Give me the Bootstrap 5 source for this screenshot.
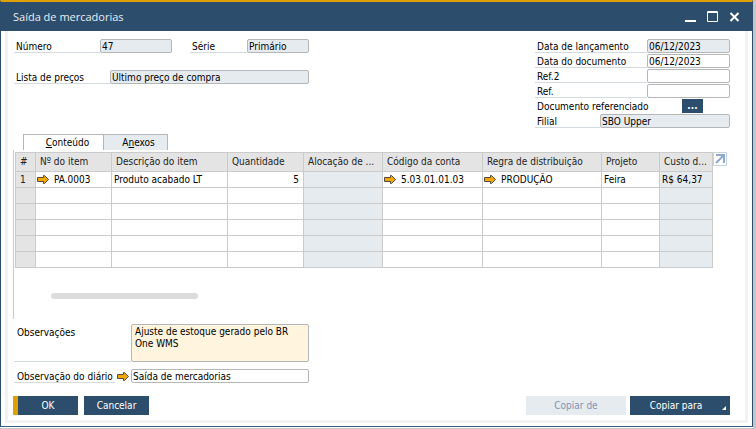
<!DOCTYPE html>
<html lang="pt-BR">
<head>
<meta charset="utf-8">
<meta name="viewport" content="width=device-width, initial-scale=1">
<title>Saída de mercadorias</title>
<link rel="stylesheet" href="https://cdn.jsdelivr.net/npm/bootstrap@5.3.0/dist/css/bootstrap.min.css">
<style>
:root { --navy: #2c4e6c; --gold: #e0a000; --mist: #e6ebf0; --rule: #cbcbcb; }
body { font: 10px/13px "DejaVu Sans Condensed", "DejaVu Sans", sans-serif; color: #000; background: #fff; }
.app-window { min-height: 100vh; border-right: 3px solid #c4c6c9; border-bottom: 1px solid #c4c6c9; }
.window-frame { border: 1px solid var(--navy); border-top: 2px solid var(--gold); border-bottom-color: #3c5f80; }
.title-bar { background: var(--navy); color: #e8edf2; height: 29px; padding: 0 11px 0 12px; }
.title-bar h1 { font: 400 11px/29px "Open Sans", sans-serif; }
.window-buttons { gap: 10px; }
.plain { border: 0; background: none; padding: 0; display: block; }
.window-buttons .plain { color: #fff; }
svg { display: block; flex: none; }
.work-area { margin: 0 4px 3px; border: 3px solid #f2f2f2; border-top: 0; padding: 8px 0 5px 5px; }
.line { display: flex; height: 14px; }
.line label, .line .caption { border-bottom: 1px solid #d5dae0; padding: 1px 0 0 2px; line-height: 14px; white-space: nowrap; }
.line .caption { border-bottom-color: transparent; }
.field { border: 1px solid #b4b6b8; border-radius: 2px; background: #fff; color: #000; padding: 1px 1px 0; min-width: 0; line-height: 12px; display: block; }
.field[readonly] { background: var(--mist); }
.left-form, .notes-form { width: 296px; padding-left: 1px; }
.left-form { gap: 17px; }
.right-form { width: 195px; margin-right: 15px; gap: 1px; }
.w-label { width: 86px; } .w-price { width: 96px; } .w-serie { width: 57px; }
.w-number { width: 72px; } .w-series { width: 62px; } .w-date { width: 83px; } .w-branch { width: 65px; } .w-diary { width: 178px; }
.dots { width: 21px; height: 14px; margin-right: 27px; background: var(--navy); color: #fff; border: 0; padding: 0; line-height: 12px; font-weight: 700; }
.tabs { padding-left: 10px; height: 16px; margin-top: 6px; }
.tabs button { border: 1px solid #b4b6b8; border-bottom: 0; border-radius: 0; background: var(--mist); color: #000; padding: 0; line-height: 15px; width: 65px; }
.tabs button + button { padding-left: 6px; }
.tabs button.active { width: 80px; background: #fff; border-right: 0; padding-left: 8px; }
.grid-panel { border-left: 1px solid var(--rule); padding: 2px 18px 0 1px; height: 169px; }
.items { table-layout: fixed; width: 100%; border-collapse: collapse; }
.items th, .items td { border: 1px solid var(--rule); padding: 0 2px; height: 16px; line-height: 15px; white-space: nowrap; overflow: hidden; }
.items th { background: #e4e4e4; font-weight: 400; color: #222; padding: 0 4px; }
.items thead th { height: 19px; line-height: 18px; }
.items thead th.tight { padding: 0 0 0 4px; }
.items .dim { background: var(--mist); }
.c-num { width: 20px; } .c-item { width: 76px; } .c-desc { width: 116px; } .c-alloc { width: 79px; }
.c-account { width: 100px; } .c-rule { width: 119px; } .c-project { width: 58px; } .c-cost { width: 53px; }
.link-cell { display: flex; align-items: center; gap: 5px; margin-left: -1px; }
.scroll-thumb { width: 147px; height: 6px; border-radius: 3px; background: #dcdcdc; margin: 25px 0 0 36px; }
.notes-form { margin-top: 5px; gap: 7px; }
.w-note { width: 117px; }
.notes-row { display: flex; height: 38px; }
.notes-row label { border-bottom: 1px solid #d5dae0; padding: 2px 0 0 3px; }
.notes-row textarea { background: #fff4dd; resize: none; padding: 1px 3px; overflow: hidden; }
.notes-form .line label { padding-left: 3px; }
.diary-link { margin: 0 2px; align-self: center; }
.actions { margin: 13px 15px 0 0; }
.ok-group { gap: 6px; }
.act { height: 19px; border: 0; border-radius: 0; padding: 0; background: var(--navy); color: #fff; width: 65px; line-height: 18px; position: relative; }
.act.primary-act { border-left: 5px solid var(--gold); }
.act.wide { width: 100px; }
.act.more { padding-right: 8px; }
.act:disabled { background: var(--mist); color: #8494b0; }
.act svg { position: absolute; right: 4px; bottom: 5px; }
</style>
<script src="https://cdn.jsdelivr.net/npm/bootstrap@5.3.0/dist/js/bootstrap.bundle.min.js"></script>
</head>
<body>
<svg width="0" height="0" class="position-absolute" aria-hidden="true"><defs>
<symbol id="arrow" viewBox="0 0 12 9"><path d="M.5 2.500h6v-2h1l4 4-4 4h-1v-2h-6z" fill="#f0a800" stroke="#55483c"/></symbol>
</defs></svg>
<div class="app-window">
<div class="window-frame">
<header class="title-bar d-flex justify-content-between">
<h1 class="m-0">Saída de mercadorias</h1>
<div class="window-buttons d-flex align-items-center">
<button class="plain" aria-label="Minimizar"><svg width="12" height="12"><path d="M0 9h11v2H0z" fill="currentColor"/></svg></button>
<button class="plain" aria-label="Maximizar"><svg width="12" height="12"><path d="M.5.5h10v10h-10zM0 1.500h11" fill="none" stroke="currentColor"/></svg></button>
<button class="plain" aria-label="Fechar"><svg width="12" height="12"><path d="M1.500 2l8 8M9.500 2l-8 8" fill="none" stroke="currentColor" stroke-width="2"/></svg></button>
</div>
</header>
<main class="work-area">
<section class="d-flex justify-content-between">
<form class="left-form d-flex flex-column">
<div class="line"><label class="w-label" for="num">Número</label><input class="field w-number" id="num" value="47" readonly><label class="w-serie ms-auto" for="serie">Série</label><input class="field w-series" id="serie" value="Primário" readonly></div>
<div class="line"><label class="w-price" for="price">Lista de preços</label><input class="field flex-grow-1" id="price" value="Último preço de compra" readonly></div>
</form>
<form class="right-form d-flex flex-column">
<div class="line"><label class="flex-grow-1" for="d1">Data de lançamento</label><input class="field w-date" id="d1" value="06/12/2023" readonly></div>
<div class="line"><label class="flex-grow-1" for="d2">Data do documento</label><input class="field w-date" id="d2" value="06/12/2023"></div>
<div class="line"><label class="flex-grow-1" for="r2">Ref.2</label><input class="field w-date" id="r2"></div>
<div class="line"><label class="flex-grow-1" for="r1">Ref.</label><input class="field w-date" id="r1"></div>
<div class="line"><span class="caption flex-grow-1" id="docref">Documento referenciado</span><button type="button" class="dots" aria-labelledby="docref">...</button></div>
<div class="line"><label class="w-branch" for="branch">Filial</label><input class="field flex-grow-1" id="branch" value="SBO Upper" readonly></div>
</form>
</section>
<div class="tabs d-flex" role="tablist">
<button role="tab" class="active" aria-selected="true"><u>C</u>onteúdo</button><button role="tab" aria-selected="false">A<u>n</u>exos</button>
</div>
<section class="grid-panel">
<div class="d-flex">
<div class="flex-grow-1">
<table class="items">
<colgroup><col class="c-num"><col class="c-item"><col class="c-desc"><col class="c-item"><col class="c-alloc"><col class="c-account"><col class="c-rule"><col class="c-project"><col class="c-cost"></colgroup>
<thead><tr><th>#</th><th>Nº do item</th><th>Descrição do item</th><th>Quantidade</th><th class="tight">Alocação de ...</th><th>Código da conta</th><th>Regra de distribuição</th><th>Projeto</th><th class="tight">Custo d...</th></tr></thead>
<tbody>
<tr><th>1</th><td><div class="link-cell"><svg width="12" height="9"><use href="#arrow"/></svg>PA.0003</div></td><td>Produto acabado LT</td><td class="text-end pe-1">5</td><td class="dim"></td><td><div class="link-cell"><svg width="12" height="9"><use href="#arrow"/></svg>5.03.01.01.03</div></td><td><div class="link-cell"><svg width="12" height="9"><use href="#arrow"/></svg>PRODUÇÃO</div></td><td>Feira</td><td class="dim">R$ 64,37</td></tr>
<tr><th></th><td></td><td></td><td></td><td class="dim"></td><td></td><td></td><td></td><td class="dim"></td></tr>
<tr><th></th><td></td><td></td><td></td><td class="dim"></td><td></td><td></td><td></td><td class="dim"></td></tr>
<tr><th></th><td></td><td></td><td></td><td class="dim"></td><td></td><td></td><td></td><td class="dim"></td></tr>
<tr><th></th><td></td><td></td><td></td><td class="dim"></td><td></td><td></td><td></td><td class="dim"></td></tr>
<tr><th></th><td></td><td></td><td></td><td class="dim"></td><td></td><td></td><td></td><td class="dim"></td></tr>
</tbody>
</table>
</div>
<button class="plain align-self-start" aria-label="Expandir"><svg width="14" height="14"><path d="M.5.5h13v13H.5z" fill="#fff" stroke="#c3d3e6"/><path d="M3 3h9M11 2v9M11 3l-8 8" fill="none" stroke="#8fa9d0" stroke-width="2"/></svg></button>
</div>
<div class="scroll-thumb"></div>
</section>
<form class="notes-form d-flex flex-column">
<div class="notes-row"><label class="w-note" for="obs">Observações</label><textarea class="field flex-grow-1" id="obs">Ajuste de estoque gerado pelo BR One WMS</textarea></div>
<div class="line"><label class="flex-grow-1" for="diary">Observação do diário</label><svg width="12" height="9" class="diary-link"><use href="#arrow"/></svg><input class="field w-diary" id="diary" value="Saída de mercadorias"></div>
</form>
<div class="actions d-flex justify-content-between">
<div class="ok-group d-flex"><button class="act primary-act">OK</button><button class="act">Cancelar</button></div>
<div class="d-flex gap-1"><button class="act wide" disabled>Copiar de</button><button class="act wide more">Copiar para<svg width="4" height="4"><path d="M4 0v4H0z" fill="#fff"/></svg></button></div>
</div>
</main>
</div>
</div>
</body>
</html>
